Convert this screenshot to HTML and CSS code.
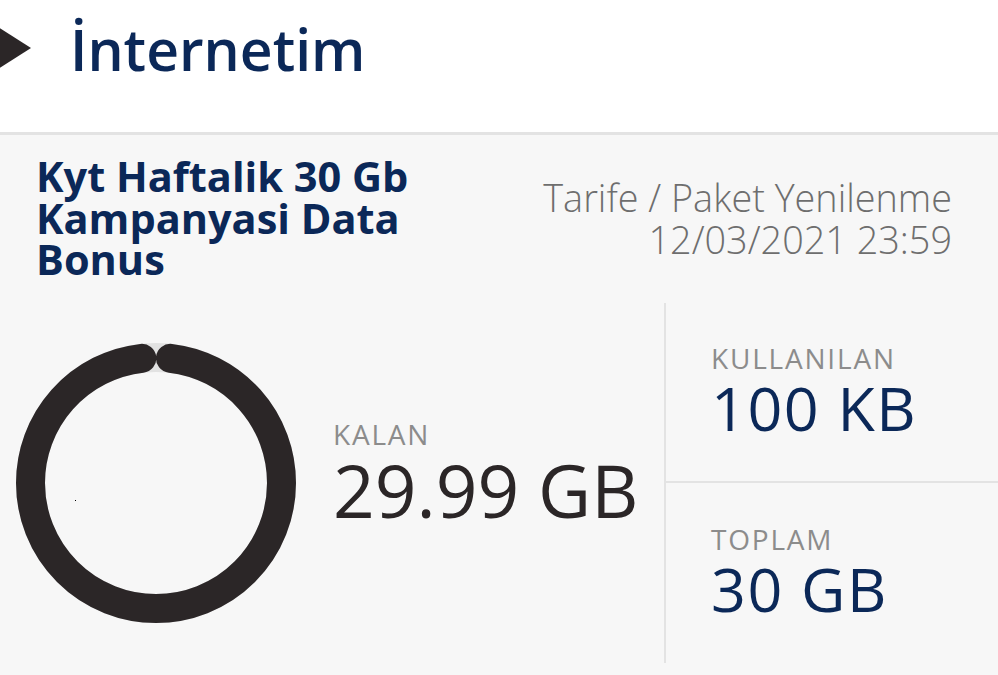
FILE: index.html
```html
<!DOCTYPE html>
<html lang="tr">
<head>
<meta charset="utf-8">
<title>İnternetim</title>
<link rel="stylesheet" href="styles.css">
</head>
<body>
<header class="topbar">
  <svg class="back" width="34" height="56" viewBox="0 0 34 56"><path d="M-10 2 L31 28 L-10 54 Z" fill="#2b2627"/></svg>
  <h1 class="page-title">İnternetim</h1>
</header>
<main class="card">
  <div class="card-head">
    <h2 class="plan-name">Kyt Haftalik 30 Gb Kampanyasi Data Bonus</h2>
    <div class="renewal">
      <div>Tarife / Paket Yenilenme</div>
      <div>12/03/2021 23:59</div>
    </div>
  </div>
  <div class="usage">
    <div class="ring-wrap">
      <svg class="ring" width="282" height="282" viewBox="0 0 282 282">
        <circle cx="141" cy="141" r="125.5" fill="none" stroke="#e2e2e2" stroke-width="29"/>
        <circle cx="141" cy="141" r="125.5" fill="none" stroke="#2b2627" stroke-width="29" stroke-linecap="round" stroke-dasharray="759.5 1000" stroke-dashoffset="-14.5" transform="rotate(-90 141 141)"/>
        <rect x="60" y="158" width="1" height="1" fill="#000"/>
      </svg>
    </div>
    <div class="remaining">
      <div class="label">KALAN</div>
      <div class="big-value">29.99 GB</div>
    </div>
    <div class="stats">
      <div class="stat">
        <div class="label">KULLANILAN</div>
        <div class="stat-value">100 KB</div>
      </div>
      <div class="stat">
        <div class="label">TOPLAM</div>
        <div class="stat-value">30 GB</div>
      </div>
    </div>
  </div>
</main>
</body>
</html>
```
FILE: styles.css
```css
* { box-sizing: border-box; }
html, body { margin: 0; padding: 0; }
body {
  width: 998px;
  height: 675px;
  overflow: hidden;
  background: #f7f7f7;
  font-family: "Open Sans", Lato, sans-serif;
}
.topbar {
  height: 135px;
  background: #fff;
  border-bottom: 3px solid #e3e3e3;
  display: flex;
  align-items: flex-start;
  padding-top: 20px;
}
.back { display: block; margin-right: 36px; flex: none; }
.page-title {
  margin: 0;
  margin-top: -6px;
  font-size: 57px;
  line-height: 70px;
  font-weight: 600;
  color: #0b2858;
}
.card { padding: 0 46px 0 36px; }
.card-head {
  height: 168px;
  display: flex;
  justify-content: space-between;
  align-items: flex-start;
  padding-top: 21px;
}
.plan-name {
  margin: 0;
  width: 440px;
  font-size: 41.5px;
  line-height: 41.5px;
  font-weight: 700;
  color: #0b2858;
}
.renewal {
  text-align: right;
  font-size: 37.8px;
  line-height: 41.5px;
  font-weight: 300;
  color: #6e6e6e;
  padding-top: 21px;
}
.usage {
  display: flex;
  margin-left: -36px;
  margin-right: -46px;
}
.ring-wrap {
  width: 333px;
  flex: none;
  padding: 39px 0 0 15px;
}
.ring { display: block; }
.remaining {
  width: 331px;
  flex: none;
  padding-top: 112px;
}
.label {
  font-size: 28px;
  line-height: 38px;
  letter-spacing: 1.8px;
  color: #8c8c8c;
  font-weight: 400;
}
.big-value {
  font-size: 73px;
  line-height: 74px;
  color: #2b2627;
  font-weight: 400;
}
.stats {
  flex: 1;
  border-left: 2px solid #e3e3e3;
  display: flex;
  flex-direction: column;
  height: 360px;
}
.stat {
  height: 178px;
  flex: none;
  padding: 36px 0 0 45px;
}
.stat + .stat {
  flex: 1;
  border-top: 2px solid #e3e3e3;
  padding-top: 37px;
}
.stat-value {
  font-size: 61px;
  line-height: 62px;
  letter-spacing: 1.5px;
  color: #0b2858;
  font-weight: 400;
}
```
